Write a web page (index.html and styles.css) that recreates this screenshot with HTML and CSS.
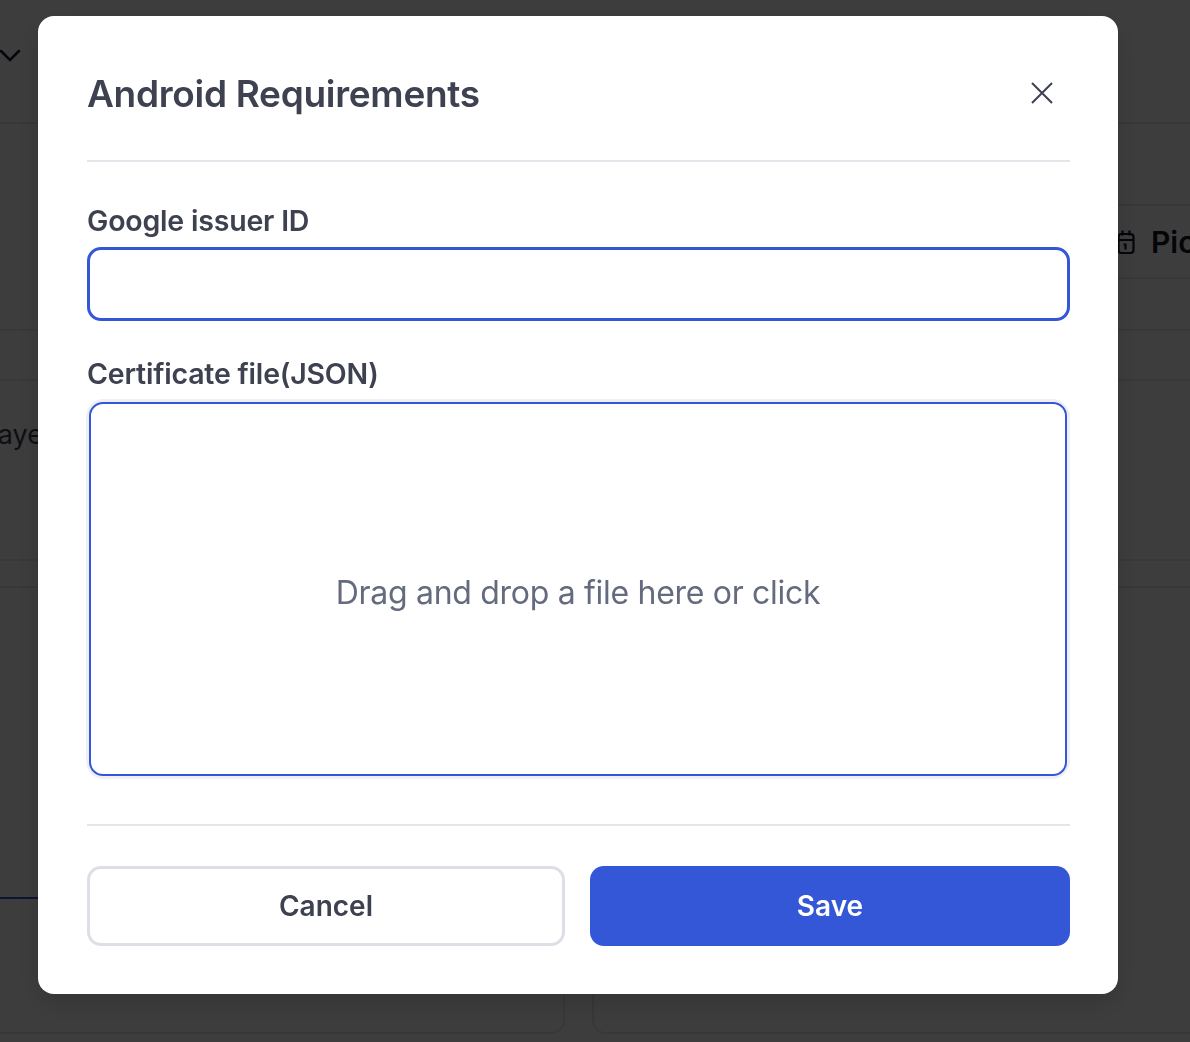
FILE: index.html
```html
<!DOCTYPE html>
<html lang="en">
<head>
  <meta charset="UTF-8" />
  <title>Android Requirements</title>
  <meta name="viewport" content="width=device-width, initial-scale=1.0" />
  <link rel="stylesheet" href="styles.css">
</head>
<body>

  <!-- Page behind the dialog -->
  <div class="page">
    <div class="topbar">
      <svg class="chevron" width="22" height="14" viewBox="0 0 22 14"><path d="M2 2l9 9 9-9" fill="none" stroke="#111827" stroke-width="2.5" stroke-linecap="round"/></svg>
    </div>
    <div class="toolbar">
      <div></div>
      <div class="picker">
        <svg width="18" height="26" viewBox="0 0 18 26"><rect x="1.5" y="5" width="15" height="19" rx="3" fill="none" stroke="#111827" stroke-width="2.2"/><path d="M1.5 11h15M5.5 1.5v5M12.5 1.5v5M6.5 15.5h2v5" fill="none" stroke="#111827" stroke-width="2.2"/></svg>
        <span>Pick a date</span>
      </div>
    </div>
    <div class="row"></div>
    <div class="content"><span class="player">Player name</span></div>
    <div class="cards">
      <div class="card">
        <div class="card-top"></div>
        <div class="card-tab"></div>
      </div>
      <div class="card"></div>
    </div>
  </div>

  <div class="overlay">
    <div class="modal">
      <div class="modal-head">
        <h2>Android Requirements</h2>
        <button class="close" type="button" aria-label="Close">
          <svg width="24" height="24" viewBox="0 0 24 24"><path d="M2 2l20 20M22 2L2 22" fill="none" stroke="#3d4150" stroke-width="2"/></svg>
        </button>
      </div>
      <div class="divider"></div>

      <label class="field-label" for="issuer">Google issuer ID</label>
      <input class="text-input" type="text" id="issuer" />

      <div class="field-label second">Certificate file(JSON)</div>
      <div class="dropzone">
        <div class="drop-inner">Drag and drop a file here or click</div>
      </div>

      <div class="divider bottom"></div>

      <div class="actions">
        <button class="btn cancel" type="button">Cancel</button>
        <button class="btn save" type="button">Save</button>
      </div>
    </div>
  </div>

</body>
</html>
```

FILE: styles.css
```css
body {
  margin: 0;
  font-family: Inter, "Noto Sans", sans-serif;
  color: #3d4150;
  overflow: hidden;
  height: 1042px;
}

/* background page */
.page {
  background: #fff;
  height: 1042px;
  overflow: hidden;
}
.topbar {
  height: 122px;
  border-bottom: 2px solid #e6e8ec;
  display: flex;
  align-items: center;
}
.chevron {
  margin-left: -1px;
  margin-top: -10px;
}
.toolbar {
  height: 206px;
  border-bottom: 2px solid #e6e8ec;
  display: grid;
  grid-template-columns: 1fr 90px;
  align-items: center;
  margin-top: -1px;
}
.picker {
  height: 71px;
  border: 2px solid #e6e8ec;
  border-right: none;
  background: #fdfdfd;
  display: flex;
  align-items: center;
  gap: 16px;
  padding-left: 15px;
  white-space: nowrap;
  overflow: hidden;
  font-size: 30px;
  font-weight: 600;
  color: #111827;
  margin-top: 31px;
}
.picker svg {
  flex-shrink: 0;
}
.row {
  height: 48px;
  border-bottom: 2px solid #e6e8ec;
}
.content {
  height: 178px;
  border-bottom: 2px solid #e6e8ec;
  display: flex;
  align-items: center;
}
.player {
  margin-left: -26px;
  margin-top: -72px;
  font-size: 27px;
  color: #374151;
}
.cards {
  display: grid;
  grid-template-columns: 586px 640px;
  gap: 27px;
  margin-left: -21px;
  padding-top: 25px;
}
.card {
  height: 448px;
  box-sizing: border-box;
  border: 2px solid #e6e8ec;
  border-radius: 14px;
}
.card-top {
  height: 309px;
}
.card-tab {
  height: 2px;
  background: #3357d7;
}

/* dialog */
.overlay {
  position: fixed;
  inset: 0;
  background: rgba(0, 0, 0, 0.76);
  display: flex;
  align-items: flex-start;
  padding: 16px 0 0 38px;
}
.modal {
  width: 1080px;
  height: 978px;
  box-sizing: border-box;
  background: #fff;
  border-radius: 16px;
  padding: 48px 48px 48px 49px;
  box-shadow: 0 10px 30px rgba(0, 0, 0, 0.15);
}
.modal-head {
  height: 58px;
  display: flex;
  align-items: center;
  justify-content: space-between;
}
.modal-head h2 {
  margin: 0;
  font-size: 37px;
  font-weight: 600;
  letter-spacing: -0.3px;
  color: #3d4150;
}
.close {
  background: none;
  border: none;
  padding: 0;
  margin-right: 16px;
  display: flex;
}
.divider {
  height: 2px;
  background: #e2e5ea;
  margin-top: 38px;
}
.divider.bottom {
  margin-top: 45px;
}
.field-label {
  display: block;
  margin-top: 43px;
  margin-bottom: 10px;
  font-size: 28.5px;
  line-height: 32px;
  font-weight: 600;
  letter-spacing: -0.2px;
  color: #3d4150;
}
.field-label.second {
  margin-top: 37px;
  margin-bottom: 9px;
}
.text-input {
  display: block;
  width: 100%;
  height: 74px;
  box-sizing: border-box;
  border: 3px solid #3357d7;
  border-radius: 14px;
  outline: none;
  font-size: 24px;
  padding: 0 20px;
}
.dropzone {
  height: 380px;
  box-sizing: border-box;
  margin-left: -1px;
  border: 3px solid #eef0f6;
  border-radius: 18px;
}
.drop-inner {
  height: 100%;
  box-sizing: border-box;
  border: 2px solid #3357d7;
  border-radius: 14px;
  padding-top: 6px;
  display: flex;
  align-items: center;
  justify-content: center;
  font-size: 32px;
  font-weight: 400;
  letter-spacing: -0.3px;
  color: #646b7e;
  cursor: pointer;
}
.actions {
  display: flex;
  gap: 25px;
  margin-top: 40px;
}
.btn {
  height: 80px;
  border-radius: 14px;
  font-family: inherit;
  font-size: 28px;
  font-weight: 600;
  cursor: pointer;
}
.cancel {
  width: 478px;
  background: #fff;
  border: 3px solid #dcdfe5;
  color: #3d4150;
}
.save {
  flex: 1;
  background: #3357d7;
  border: none;
  color: #fff;
}
```
